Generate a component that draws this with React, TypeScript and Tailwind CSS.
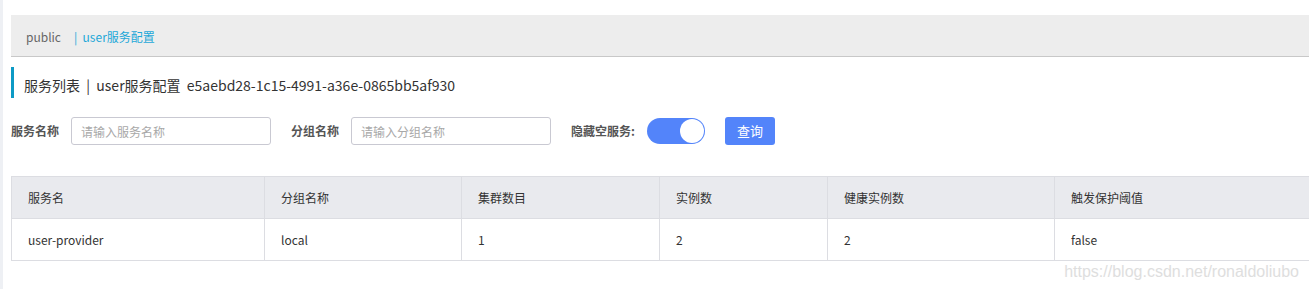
const columns = ["服务名", "分组名称", "集群数目", "实例数", "健康实例数", "触发保护阈值"]
const widths = ["w-[253px]", "w-[197px]", "w-[198px]", "w-[168px]", "w-[227px]", "flex-1"]
const rows = [["user-provider", "local", "1", "2", "2", "false"]]

export default function App() {
    return (
        <div
            className="flex w-[1309px] h-[289px] bg-white overflow-hidden text-[#333]"
            style={{ fontFamily: '"Noto Sans CJK SC", "Noto Sans", sans-serif' }}
        >
            {/* left page edge */}
            <div className="w-[3px] bg-[#eef0f4]" />
            <div className="flex-1 pl-[8px] pt-[15px]">
                {/* breadcrumb */}
                <div className="h-[42px] bg-[#ededed] border-b border-[#c8c8c8] flex items-center pl-[15px] text-[12px] pt-[3px]">
                    <span className="text-[#666]">public</span>
                    <span className="ml-[13px] text-[#1ea8d8]">| &nbsp;user服务配置</span>
                </div>

                {/* page title */}
                <div className="mt-[10px] h-[31px] border-l-[3px] border-[#0d9ac5] flex items-center pl-[10px] pt-[6px] text-[14px] text-[#333]">
                    服务列表 &nbsp;|&nbsp; user服务配置 &nbsp;e5aebd28-1c15-4991-a36e-0865bb5af930
                </div>

                {/* search form */}
                <div className="mt-[19px] flex items-center h-[28px] text-[12px]">
                    <span className="font-bold text-[#555] w-[60px]">服务名称</span>
                    <input
                        placeholder="请输入服务名称"
                        className="w-[200px] h-[28px] border border-[#c9c9d2] rounded-[3px] px-[9px] text-[12px] placeholder-[#a8a8a8] outline-none"
                    />
                    <span className="font-bold text-[#555] ml-[20px] w-[60px]">分组名称</span>
                    <input
                        placeholder="请输入分组名称"
                        className="w-[200px] h-[28px] border border-[#c9c9d2] rounded-[3px] px-[9px] text-[12px] placeholder-[#a8a8a8] outline-none"
                    />
                    <span className="font-bold text-[#555] ml-[20px] w-[76px]">隐藏空服务:</span>
                    <div className="w-[58px] h-[26px] rounded-full bg-[#5384fa] flex items-center justify-end pr-[1px]">
                        <div className="w-[24px] h-[24px] rounded-full bg-white" />
                    </div>
                    <button className="ml-[20px] w-[50px] h-[28px] rounded-[3px] bg-[#5384fa] text-white text-[13px]">
                        查询
                    </button>
                </div>

                {/* table */}
                <div className="mt-[31px] border-l border-t border-[#dcdde2] text-[12px]">
                    <div className="flex h-[42px] bg-[#e9eaee] border-b border-[#dcdde2]">
                        {columns.map((c, i) => (
                            <div
                                key={c}
                                className={`${widths[i]} flex items-center pl-[16px] ${i < 5 ? "border-r border-[#dcdde2]" : ""}`}
                            >
                                {c}
                            </div>
                        ))}
                    </div>
                    {rows.map((r, ri) => (
                        <div key={ri} className="flex h-[42px] border-b border-[#dcdde2]">
                            {r.map((v, i) => (
                                <div
                                    key={i}
                                    className={`${widths[i]} flex items-center pl-[16px] ${i < 5 ? "border-r border-[#dcdde2]" : ""}`}
                                >
                                    {v}
                                </div>
                            ))}
                        </div>
                    ))}
                </div>

                {/* watermark */}
                <div
                    className="flex justify-end pr-[10px] mt-[-1px] text-[16px] text-[#dedede]"
                    style={{ fontFamily: '"Liberation Sans", Arial, sans-serif' }}
                >
                    https://blog.csdn.net/ronaldoliubo
                </div>
            </div>
        </div>
    )
}
